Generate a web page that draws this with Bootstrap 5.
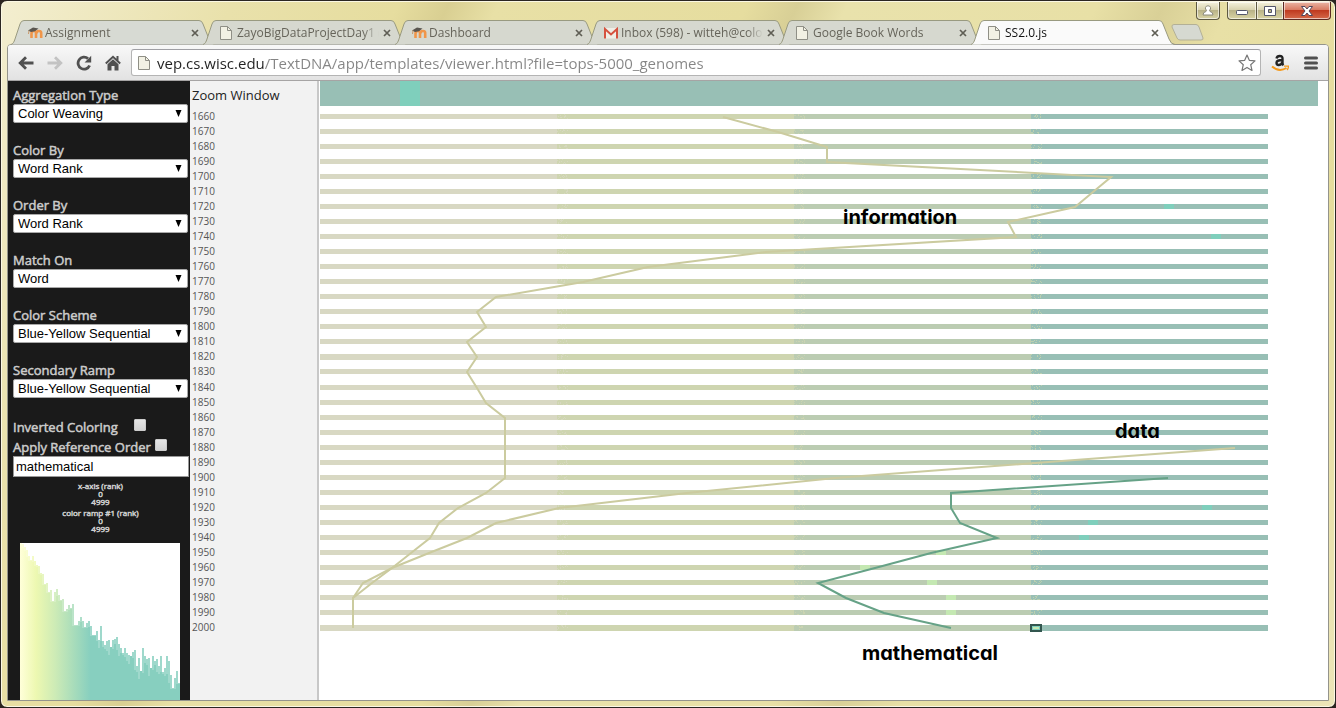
<!DOCTYPE html>
<html lang="en">
<head>
<meta charset="utf-8">
<meta name="viewport" content="width=device-width, initial-scale=1">
<title>SS2.0.js</title>
<link href="https://cdn.jsdelivr.net/npm/bootstrap@5.3.0/dist/css/bootstrap.min.css" rel="stylesheet">
<style>
  body { font-family: "Open Sans", "Noto Sans", sans-serif; font-size: 13px; background: #2b2420; }
  button { border: 0; background: none; padding: 0; }

  .win { height: 100vh; min-height: 520px; border: 1px solid #2b2622; border-radius: 7px; overflow: hidden;
    box-shadow: inset 0 0 0 1px #fbf8e4;
    background: linear-gradient(115deg, #f3eed0 0, #e9e1ab 14%, #e6dd9f 24%, #d9cf92 27%, #e8e0a6 30%, #e6dd9f 45%, #d8cf96 48%, #e9e2ac 51%, #e8e0a6 66%, #d9d097 70%, #e8e0a6 74%, #e5dc9c 86%, #ece5b8 100%); }
  .tabstrip { height: 43px; padding-left: 10px; }
  .tab { width: 204px; height: 25px; margin: 0 -12px -1px 0; padding: 0 12px 0 16px; position: relative; font-size: 12px; color: #66645a; flex: 0 1 204px; min-width: 0; isolation: isolate; z-index: 1; }
  .tab.on { z-index: 3; color: #111; }
  .tab .shape { position: absolute; inset: 0; width: 100%; height: 100%; z-index: -1; }
  .tab .title { flex: 1 1 0; min-width: 0; overflow: hidden; white-space: nowrap; line-height: 24px; color: inherit; text-decoration: none;
    -webkit-mask-image: linear-gradient(to left, transparent 0, #000 16px); }
  .tab .icon { width: 16px; height: 16px; flex: none; margin-right: 2px; }
  .tab .x { width: 16px; height: 24px; flex: none; color: #5f5e55; display: flex; align-items: center; justify-content: center; }
  .newtab { margin: 0 0 3px 8px; width: 33px; height: 17px; }
  .newtab svg, .tool svg, .wbtn svg { display: block; }
  .wctl { position: absolute; top: 1px; right: 4px; }
  .wbtn { height: 18px; display: flex; align-items: center; justify-content: center; border: 1px solid #5d5942; border-top: 0;
    background: linear-gradient(#f5f2dd 0, #d8d3b0 45%, #b9b388 50%, #d9d4a4 100%); box-shadow: inset 0 0 0 1px rgba(255,255,255,.6); }
  .wbtn.user { width: 24px; border-radius: 0 0 4px 4px; margin-right: 7px; }
  .wbtn.min { width: 29px; border-radius: 0 0 0 4px; border-right: 0; }
  .wbtn.max { width: 27px; border-right: 0; }
  .wbtn.close { width: 48px; border-radius: 0 0 4px 0; border-color: #5c2a22; background: linear-gradient(#eab5a4 0, #d97c64 45%, #bf3a20 50%, #d5694a 100%); }

  .browser { margin: 0 6px 6px; border: 1px solid #94948c; border-radius: 4px 4px 0 0; min-height: 0; background: #fff; overflow: hidden; }
  .toolbar { height: 36px; padding: 0 3px; background: linear-gradient(#f8f8f8, #e2e2e2); border-bottom: 1px solid #a6a4a4; }
  .tool { width: 29px; height: 28px; display: flex; align-items: center; justify-content: center; }
  .tool.menu { margin-left: 2px; }
  .omni { height: 27px; border: 1px solid #b4b4b4; border-top-color: #9f9fa4; border-radius: 3px; background: #fff; margin: 0 4px; padding: 0 4px 0 5px; }
  .omni input { border: 0; outline: 0; padding: 0; height: 24px; font-size: 15px; min-width: 0;
    background: linear-gradient(90deg, #222 108px, #858585 108px); -webkit-background-clip: text; background-clip: text; color: transparent; }

  .side { width: 182px; flex: none; background: #1a1a1a; color: #ccc; padding: 5px 1px 0 5px; overflow: hidden; }
  .side label { line-height: 18px; display: block; -webkit-text-stroke: .5px; }
  .side select { display: block; width: 175px; height: 19px; margin-bottom: 18px; padding: 0 4px; border: 1px solid #a9a9a9; border-radius: 2px; color: #000;
    appearance: none; font: 13px "Liberation Sans", Arial, sans-serif;
    background: #fff url("data:image/svg+xml,%3Csvg xmlns='http://www.w3.org/2000/svg' width='7' height='7'%3E%3Cpath d='M.5 0h6L3.500 7z'/%3E%3C/svg%3E") no-repeat right 5px top 5px; }
  .tick { height: 20px; }
  .tick label { padding-top: 2px; }
  .tick input { appearance: none; width: 12px; height: 12px; margin: 3px 0 0; border: 1px solid #ccc; border-radius: 1px; background: linear-gradient(#e6e6e6, #d4d4d4); }
  .side .word { display: block; width: 176px; height: 21px; border: 1px solid #999; padding: 0 2px; font: 13px "Liberation Sans", Arial, sans-serif; color: #000; }
  .legend-text { padding-top: 5px; }
  .ramp { font-size: 8px; line-height: 8px; text-align: center; margin: 0 0 3px; width: 175px; -webkit-text-stroke: .5px; }
  .histo { display: block; width: 160px; margin: 10px 0 0 7px; background: #fff; }

  .years { width: 129px; flex: none; background: #f2f2f2; border-right: 2px solid #c8c8c8; padding: 5px 0 0 2px; color: #222; }
  .years h1 { font-size: 13px; line-height: 18px; font-weight: 400; margin: 0 0 5px; }
  .years ol { display: grid; grid-auto-rows: 1fr; height: 526px; margin: 0; padding: 0; list-style: none; font-size: 10px; line-height: 15px; color: #555; }
  .plot { padding-left: 1px; min-width: 0; overflow: hidden; }
  .plot svg { display: block; width: 100%; }
  .plot text { font: 700 20px Inter, Lato, sans-serif; font-feature-settings: "cv11"; fill: #000; }
</style>
</head>
<body>
<svg width="0" height="0" class="position-absolute" aria-hidden="true">
  <symbol id="tabshape" viewBox="0 0 204 25" preserveAspectRatio="none">
    <path d="M0 24.500C2 24 3 22 4 19L9 4Q10 .5 13 .5H188Q191 .5 192 4L198 19Q200 24.500 204 24.500" fill="currentColor" stroke="#999a80"/>
  </symbol>
  <symbol id="moodle" viewBox="0 0 16 16">
    <path d="M4.500 13V8.500Q4.500 6 7 6T9 8.500V13M9.500 8.500Q9.500 6 12 6T14.200 8.500V13" fill="none" stroke="#f0964a" stroke-width="2.600"/>
    <path d="M1 5.500L6 2.500L11.500 3.500L8 6.200L4 7z" fill="#5a564f"/><path d="M2 5.500L1.500 9" stroke="#c99a6c" fill="none"/>
  </symbol>
  <symbol id="page" viewBox="0 0 16 16">
    <path d="M1.500 1.500H8.500L12.500 5.500V14.500H1.500z" fill="#f2f1e4" stroke="#8f8f86"/><path d="M8.500 1.500V5.500H12.500" fill="none" stroke="#8f8f86"/>
  </symbol>
  <symbol id="cross" viewBox="0 0 8 8"><path d="M1 1L7 7M7 1L1 7" stroke="currentColor" stroke-width="1.700"/></symbol>
</svg>

<div class="win d-flex flex-column position-relative">
  <header class="tabstrip d-flex align-items-end flex-shrink-0">
    <div class="tab d-flex align-items-center"><svg class="shape" style="color:#d7dad3"><use href="#tabshape"/></svg><svg class="icon"><use href="#moodle"/></svg><a class="title" href="#">Assignment</a><button class="x" aria-label="Close"><svg width="8" height="8"><use href="#cross"/></svg></button></div>
    <div class="tab d-flex align-items-center"><svg class="shape" style="color:#d6d8cf"><use href="#tabshape"/></svg><svg class="icon"><use href="#page"/></svg><a class="title" href="#">ZayoBigDataProjectDay1 (</a><button class="x" aria-label="Close"><svg width="8" height="8"><use href="#cross"/></svg></button></div>
    <div class="tab d-flex align-items-center"><svg class="shape" style="color:#d6d8cf"><use href="#tabshape"/></svg><svg class="icon"><use href="#moodle"/></svg><a class="title" href="#">Dashboard</a><button class="x" aria-label="Close"><svg width="8" height="8"><use href="#cross"/></svg></button></div>
    <div class="tab d-flex align-items-center"><svg class="shape" style="color:#d6d8cf"><use href="#tabshape"/></svg><svg class="icon" viewBox="0 0 16 16"><path d="M1 3H15V13.500H1z" fill="#efeee6"/><path d="M2 13.500V4L8 9.500L14 4V13.500" fill="none" stroke="#d5523f" stroke-width="2"/></svg><a class="title" href="#">Inbox (598) - witteh@colo</a><button class="x" aria-label="Close"><svg width="8" height="8"><use href="#cross"/></svg></button></div>
    <div class="tab d-flex align-items-center"><svg class="shape" style="color:#d6d8cf"><use href="#tabshape"/></svg><svg class="icon"><use href="#page"/></svg><a class="title" href="#">Google Book Words</a><button class="x" aria-label="Close"><svg width="8" height="8"><use href="#cross"/></svg></button></div>
    <div class="tab on d-flex align-items-center"><svg class="shape" style="color:#fafafa"><use href="#tabshape"/></svg><svg class="icon"><use href="#page"/></svg><a class="title" href="#">SS2.0.js</a><button class="x" aria-label="Close"><svg width="8" height="8"><use href="#cross"/></svg></button></div>
    <button class="newtab flex-shrink-0" aria-label="New tab"><svg width="33" height="17" viewBox="0 0 33 17"><path d="M3 .5H25Q27 .5 28 3L32 14Q32.500 16 30 16H9Q7 16 6 14L1 3Q.5 .5 3 .5z" fill="#d6d9d1" stroke="#b3b096"/></svg></button>
    <div class="wctl d-flex">
      <button class="wbtn user" aria-label="Profile"><svg width="12" height="11" viewBox="0 0 12 11"><path d="M6 .8a2.400 2.400 0 0 1 1.500 4.400L8 6.500Q11 7 11 10H1Q1 7 4 6.500L4.500 5.200A2.400 2.400 0 0 1 6 .8z" fill="#fff" stroke="#8c8b7c"/></svg></button>
      <button class="wbtn min" aria-label="Minimize"><svg width="12" height="9" viewBox="0 0 12 9"><rect x=".5" y="4.500" width="11" height="4" rx="1" fill="#fff" stroke="#53566b"/></svg></button>
      <button class="wbtn max" aria-label="Maximize"><svg width="12" height="10" viewBox="0 0 12 10"><path d="M.5 .5H11.500V9.500H.5zM4.500 3.500V6.500H7.500V3.500z" fill="#fff" fill-rule="evenodd" stroke="#53566b"/></svg></button>
      <button class="wbtn close" aria-label="Close window"><svg width="12" height="10" viewBox="0 0 12 10"><path d="M.5 .5H4L6 3L8 .5H11.500L8 5L11.500 9.500H8L6 7L4 9.500H.5L4 5z" fill="#fff" stroke="#53465b"/></svg></button>
    </div>
  </header>

  <div class="browser flex-fill d-flex flex-column">
    <nav class="toolbar d-flex align-items-center flex-shrink-0">
      <button class="tool" aria-label="Back"><svg width="16" height="14" viewBox="0 0 16 14"><path d="M15.500 7H3M8 1.200L2.200 7L8 12.800" fill="none" stroke="#505050" stroke-width="2.800"/></svg></button>
      <button class="tool" aria-label="Forward"><svg width="16" height="14" viewBox="0 0 16 14"><path d="M.5 7H13M8 1.200L13.800 7L8 12.800" fill="none" stroke="#c3c3c3" stroke-width="2.800"/></svg></button>
      <button class="tool" aria-label="Reload"><svg width="16" height="16" viewBox="0 0 16 16"><path d="M13.600 10.500A6 6 0 1 1 12 3.600" fill="none" stroke="#505050" stroke-width="2.800"/><path d="M15.200 .8V7.400H8.600z" fill="#505050"/></svg></button>
      <button class="tool" aria-label="Home"><svg width="16" height="16" viewBox="0 0 16 16"><path d="M.8 8.500L8 1.800L15.200 8.500M12.500 1V6" fill="none" stroke="#505050" stroke-width="2"/><path d="M2.500 9.200L8 4.200L13.500 9.200V15.500H9.500V11H6.500V15.500H2.500z" fill="#505050"/></svg></button>
      <div class="omni d-flex align-items-center flex-fill">
        <svg class="flex-shrink-0 me-1" width="16" height="16"><use href="#page"/></svg>
        <input class="flex-fill" type="text" aria-label="Address" value="vep.cs.wisc.edu/TextDNA/app/templates/viewer.html?file=tops-5000_genomes">
        <button class="flex-shrink-0" aria-label="Bookmark this page"><svg class="d-block" width="18" height="18" viewBox="0 0 18 18"><path d="M9 1L11.300 6.300L17 6.900L12.700 10.700L14 16.400L9 13.400L4 16.400L5.300 10.700L1 6.900L6.700 6.300z" fill="#fff" stroke="#777" stroke-width="1.200" stroke-linejoin="round"/></svg></button>
      </div>
      <button class="tool" aria-label="Amazon"><svg width="18" height="18" viewBox="0 0 18 18"><path d="M5.500 4.500Q6 2 8.800 2T11.500 4.500V9Q11.500 10.500 12.500 11.300M11.500 6Q5.500 6 5.500 8.800Q5.500 11 7.500 11Q10.500 11 11.500 8" fill="none" stroke="#222" stroke-width="2.400"/><path d="M1 12.500Q8 18.500 15.500 14" fill="none" stroke="#f59a1c" stroke-width="2"/><path d="M13 12.200H17.500Q17.500 14.500 16 16" fill="none" stroke="#f59a1c" stroke-width="1.200"/></svg></button>
      <button class="tool menu" aria-label="Menu"><svg width="14" height="14" viewBox="0 0 14 14"><path d="M1.500 2H12.500M1.500 7H12.500M1.500 12H12.500" stroke="#505050" stroke-width="3" stroke-linecap="round"/></svg></button>
    </nav>

    <main class="d-flex flex-fill" style="min-height:0">
      <form class="side">
        <label for="agg">Aggregation Type</label><select id="agg"><option>Color Weaving</option></select>
        <label for="col">Color By</label><select id="col"><option>Word Rank</option></select>
        <label for="ord">Order By</label><select id="ord"><option>Word Rank</option></select>
        <label for="mat">Match On</label><select id="mat"><option>Word</option></select>
        <label for="sch">Color Scheme</label><select id="sch"><option>Blue-Yellow Sequential</option></select>
        <label for="sec">Secondary Ramp</label><select id="sec"><option>Blue-Yellow Sequential</option></select>
        <div class="tick d-flex"><label for="inv" class="me-3">Inverted Coloring</label><input type="checkbox" id="inv"></div>
        <div class="tick d-flex"><label for="ref" class="me-1">Apply Reference Order</label><input type="checkbox" id="ref"></div>
        <input class="word" type="text" aria-label="Search word" value="mathematical">
        <div class="legend-text">
          <p class="ramp">x-axis (rank)<br>0<br>4999</p>
          <p class="ramp">color ramp #1 (rank)<br>0<br>4999</p>
        </div>
        <svg class="histo" id="histo" height="157" viewBox="0 0 160 157" shape-rendering="crispEdges">
          <defs><linearGradient id="ramp" gradientUnits="userSpaceOnUse" x1="0" y1="0" x2="160" y2="0">
            <stop offset="0" stop-color="#ffffd9"/><stop offset=".1" stop-color="#edf8b1"/><stop offset=".22" stop-color="#cdebb6"/><stop offset=".44" stop-color="#87cfbf"/><stop offset="1" stop-color="#87cfbf"/>
          </linearGradient></defs>
        </svg>
      </form>
      <section class="years"><h1>Zoom Window</h1><ol id="years"></ol></section>
      <section class="plot flex-fill">
        <svg id="plot" viewBox="0 0 1008 619" preserveAspectRatio="xMinYMin meet">
          <g id="bars" shape-rendering="crispEdges"></g>
          <g id="lines" fill="none" stroke-width="2"></g>
          <text x="523" y="143">information</text>
          <text x="795" y="357">data</text>
          <text x="542" y="579">mathematical</text>
        </svg>
      </section>
    </main>
  </div>
</div>

<script>
const NS = "http://www.w3.org/2000/svg";
function add(parent, tag, attrs) {
  const el = document.createElementNS(NS, tag);
  for (const k in attrs) el.setAttribute(k, attrs[k]);
  parent.appendChild(el);
}
const rect = (p, x, y, width, height, fill, extra) => add(p, "rect", { x, y, width, height, fill, ...extra });

const bars = document.getElementById("bars"), lines = document.getElementById("lines"), years = document.getElementById("years");
const rowY = year => 33 + Math.round((year - 1660) / 10 * 526 / 35);
const quarters = ["#d8d8c3", "#ced5b0", "#bbccb2", "#98bfb5"];

// overview strip with the zoomed part marked
rect(bars, 0, 0, 998, 25, "#98bfb5");
rect(bars, 80, 0, 20, 25, "#7fcfbc");

let seed = 7;
const rnd = () => (seed = seed * 16807 % 2147483647) / 2147483647;
for (let year = 1660; year <= 2000; year += 10) {
  const li = document.createElement("li");
  li.textContent = year;
  years.appendChild(li);
  const y = rowY(year), h = year === 1820 || year === 2000 ? 6 : 5;
  quarters.forEach((c, q) => {
    rect(bars, q * 237, y, 237, h, c);
    // woven pixels where two rank ranges meet
    if (q > 0) for (let n = 0; n < 12; n++)
      rect(bars, q * 237 + Math.floor(rnd() * 11), y + Math.floor(rnd() * 5), 1, 1, q === 3 ? "#c3d3ae" : quarters[q - 1], { opacity: .8 });
  });
}
const green = "#c4e8b2", teal = "#7fcfbc";
[[1720, 844, teal], [1740, 891, teal], [1920, 882, teal], [1930, 768, teal], [1940, 759, teal],
 [1950, 616, green], [1960, 540, green], [1970, 607, green], [1980, 626, green], [1990, 626, green]]
  .forEach(([year, x, c]) => rect(bars, x, rowY(year), 10, 5, c));
rect(bars, 711, 544, 10, 6, "#7fcfbc", { stroke: "#33564f", "stroke-width": 2 });
rect(bars, 713, 546, 6, 2, "#c4e8b2");

// rank of each word, one value for each decade
const words = [
  { from: 1660, color: "#cbcb9f", xs: [403, 458, 507, 507, 791, 773, 755, 688, 696, 446, 328, 263, 176, 157, 166, 147, 157, 147, 157, 166, 185, 185, 185, 185, 185, 166, 138, 119, 110, 91, 72, 52, 33, 33, 33] },
  { from: 1880, color: "#cbcb9f", xs: [915, 715, 515, 367, 239, 176, 147, 109, 72, 43, 33, 33, 33] },
  { from: 1900, color: "#66a287", xs: [848, 631, 631, 640, 677, 611, 555, 498, 526, 564, 631] }
];
words.forEach(w => add(lines, "polyline", { stroke: w.color, points: w.xs.map((x, i) => x + "," + (rowY(w.from + i * 10) + 3)).join(" ") }));

// histogram: faint peaks over the solid, lower counts
const tops = [0, 1, 4, 7, 13, 17, 13, 18, 22, 23, 30, 31, 41, 40, 49, 47, 58, 49, 46, 52, 57, 56, 68, 66, 62, 65, 61, 82, 82, 78, 74, 78, 84, 80, 78, 83, 92, 92, 88, 97,
  83, 98, 102, 98, 97, 104, 97, 96, 94, 101, 105, 110, 105, 110, 112, 113, 109, 107, 123, 115, 128, 105, 113, 116, 115, 125, 113, 118, 116, 123, 113, 129, 125, 113, 118, 132, 145, 135, 128, 140];
const histo = document.getElementById("histo");
tops.forEach((t, i) => {
  const low = Math.max(t, tops[i - 1] || 0, tops[i + 1] || 0) + (i > 38 && i < 75 ? i % 5 * 2 : 1);
  rect(histo, i * 2, t, 2, low - t, "url(#ramp)", { opacity: .8 });
  rect(histo, i * 2, low, 2, 157 - low, "url(#ramp)");
});
</script>
<script src="https://cdn.jsdelivr.net/npm/bootstrap@5.3.0/dist/js/bootstrap.bundle.min.js"></script>
</body>
</html>
